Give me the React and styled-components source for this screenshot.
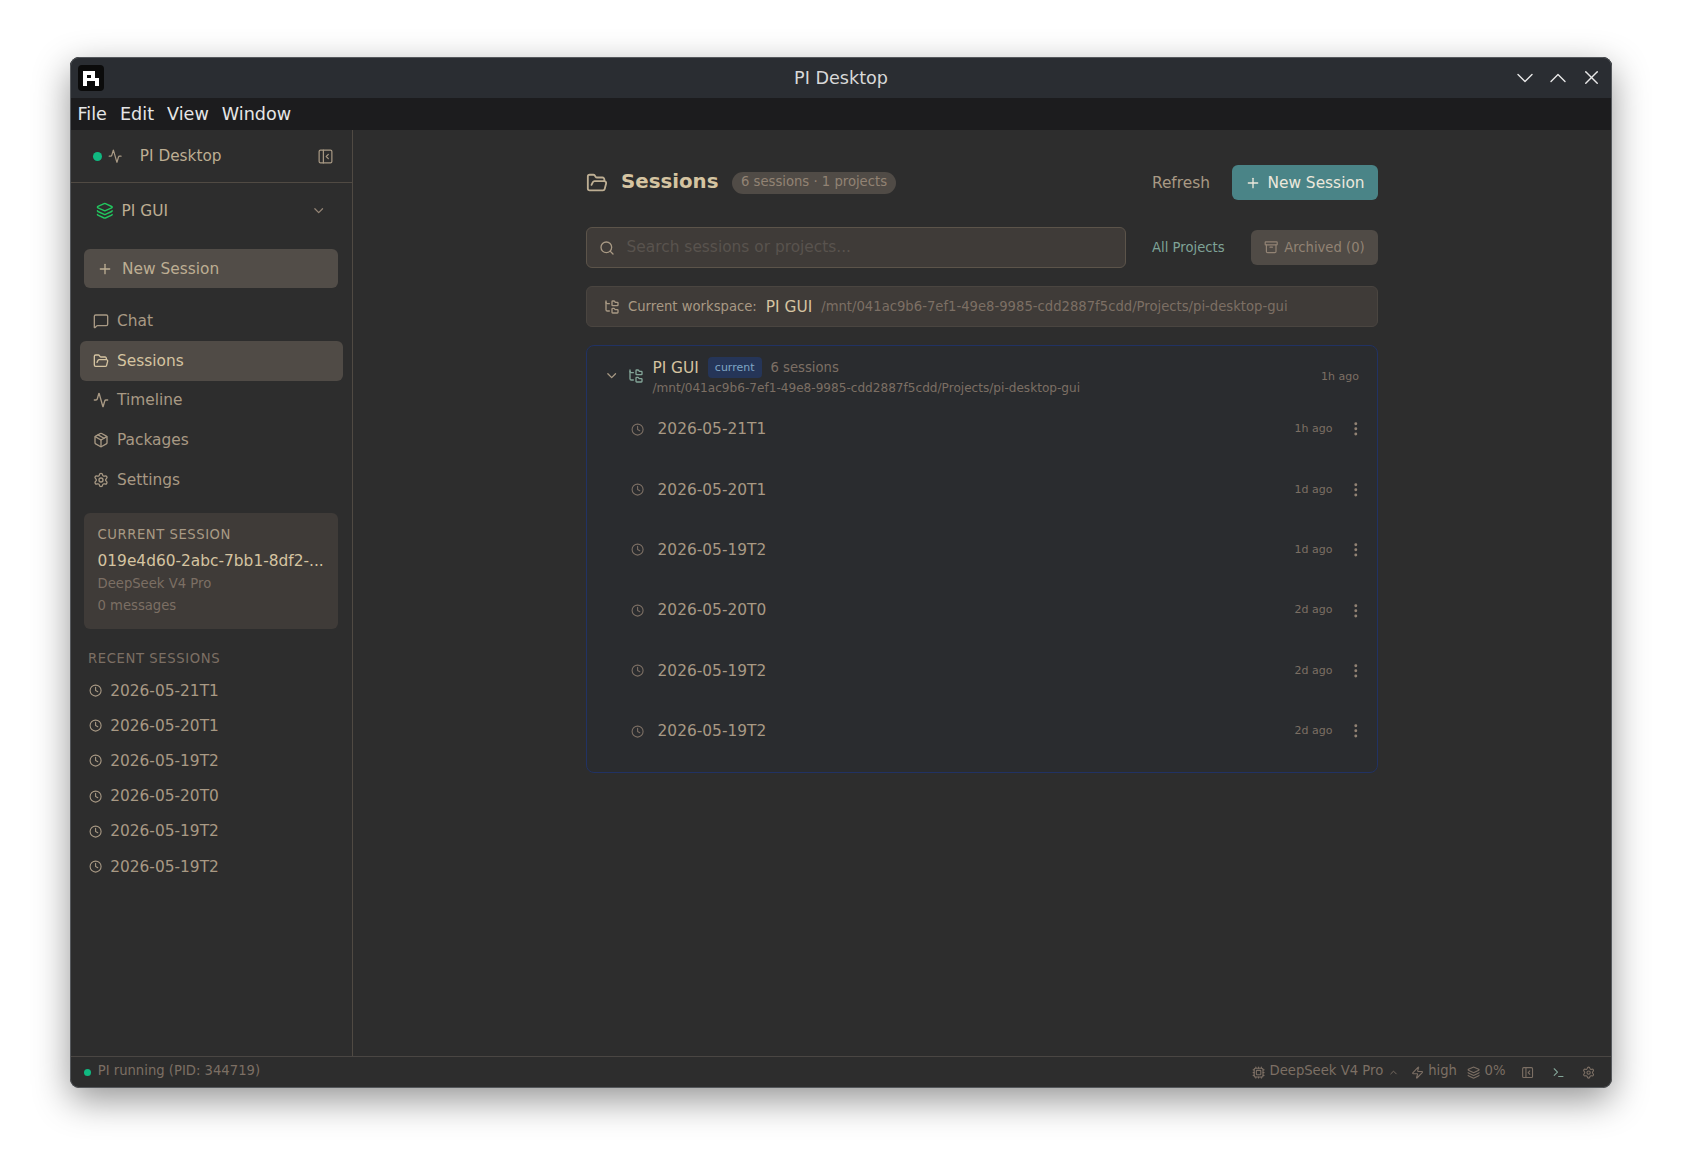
import React from 'react';
import styled, { createGlobalStyle } from 'styled-components';
import {
  Activity,
  Archive,
  ChevronDown,
  ChevronUp,
  Clock,
  Cpu,
  EllipsisVertical,
  FolderOpen,
  FolderTree,
  Layers,
  MessageSquare,
  Package,
  PanelLeftClose,
  Plus,
  Search,
  Settings,
  Terminal,
  X,
  Zap,
} from 'lucide-react';

const sessions = [
  { name: '2026-05-21T1', ago: '1h ago' },
  { name: '2026-05-20T1', ago: '1d ago' },
  { name: '2026-05-19T2', ago: '1d ago' },
  { name: '2026-05-20T0', ago: '2d ago' },
  { name: '2026-05-19T2', ago: '2d ago' },
  { name: '2026-05-19T2', ago: '2d ago' },
];

const navItems = [
  { label: 'Chat', icon: MessageSquare },
  { label: 'Sessions', icon: FolderOpen, active: true },
  { label: 'Timeline', icon: Activity },
  { label: 'Packages', icon: Package },
  { label: 'Settings', icon: Settings },
];

const workspacePath = '/mnt/041ac9b6-7ef1-49e8-9985-cdd2887f5cdd/Projects/pi-desktop-gui';

export default function App() {
  return (
    <Page>
      <GlobalStyle />
      <Window>
        <TitleBar>
          <Logo viewBox="0 0 26 26">
            <rect width="26" height="26" rx="4" fill="#0b0b0b" />
            <path d="M5 6h12v10h-8v5H5z M9 10v3h4v-3z" fill="#fff" fillRule="evenodd" />
            <rect x="17" y="13" width="4" height="8" fill="#fff" />
          </Logo>
          <WindowTitle>PI Desktop</WindowTitle>
          <WindowControls>
            <ChevronDown size={28} strokeWidth={1.2} />
            <ChevronUp size={28} strokeWidth={1.2} />
            <CloseIcon size={23} strokeWidth={1.5} />
          </WindowControls>
        </TitleBar>
        <MenuBar>
          <span>File</span>
          <span>Edit</span>
          <span>View</span>
          <span>Window</span>
        </MenuBar>
        <Body>
          <Sidebar>
            <SidebarHead>
              <StatusDot />
              <Activity size={14.3} color="#a89984" />
              <AppName>PI Desktop</AppName>
              <PanelLeftClose size={17} strokeWidth={1.7} color="#a89984" />
            </SidebarHead>
            <ProjectPicker>
              <Layers size={17.6} color="#22c55e" />
              <ProjectName>PI GUI</ProjectName>
              <ChevronDown size={15.4} color="#928374" />
            </ProjectPicker>
            <SideNewButton>
              <Plus size={16} />
              New Session
            </SideNewButton>
            <Nav>
              {navItems.map(({ label, icon: Icon, active }) => (
                <NavItem key={label} $active={active}>
                  <Icon size={16} />
                  {label}
                </NavItem>
              ))}
            </Nav>
            <CurrentCard>
              <CardLabel>CURRENT SESSION</CardLabel>
              <CardId>019e4d60-2abc-7bb1-8df2-...</CardId>
              <CardMeta>DeepSeek V4 Pro</CardMeta>
              <CardMeta>0 messages</CardMeta>
            </CurrentCard>
            <RecentLabel>RECENT SESSIONS</RecentLabel>
            <RecentList>
              {sessions.map((s, i) => (
                <RecentItem key={i}>
                  <Clock size={13.2} />
                  {s.name}
                </RecentItem>
              ))}
            </RecentList>
          </Sidebar>
          <Main>
            <Content>
              <Header>
                <FolderOpen size={22} color="#bdae93" />
                <Heading>Sessions</Heading>
                <CountPill>6 sessions · 1 projects</CountPill>
                <RefreshLink>Refresh</RefreshLink>
                <PrimaryButton>
                  <Plus size={16} />
                  New Session
                </PrimaryButton>
              </Header>
              <FilterRow>
                <SearchBox>
                  <Search size={16} color="#a89984" />
                  <SearchInput placeholder="Search sessions or projects..." readOnly />
                </SearchBox>
                <AllProjects>All Projects</AllProjects>
                <ArchivedButton>
                  <Archive size={14.4} />
                  Archived (0)
                </ArchivedButton>
              </FilterRow>
              <WorkspaceBar>
                <FolderTree size={16} color="#a89984" />
                <WorkspaceLabel>Current workspace:</WorkspaceLabel>
                <WorkspaceName>PI GUI</WorkspaceName>
                <WorkspacePath>{workspacePath}</WorkspacePath>
              </WorkspaceBar>
              <ProjectCard>
                <ProjectHead>
                  <ChevronDown size={15.4} color="#a89984" />
                  <FolderTree size={16} color="#83a598" />
                  <ProjectInfo>
                    <ProjectTitleRow>
                      <ProjectTitle>PI GUI</ProjectTitle>
                      <CurrentBadge>current</CurrentBadge>
                      <SessionCount>6 sessions</SessionCount>
                    </ProjectTitleRow>
                    <ProjectPath>{workspacePath}</ProjectPath>
                  </ProjectInfo>
                  <AgoText>1h ago</AgoText>
                </ProjectHead>
                <SessionList>
                  {sessions.map((s, i) => (
                    <SessionRow key={i}>
                      <Clock size={13.2} color="#7c6f64" />
                      <SessionName>{s.name}</SessionName>
                      <RowAgo>{s.ago}</RowAgo>
                      <EllipsisVertical size={17.6} color="#928374" />
                    </SessionRow>
                  ))}
                </SessionList>
              </ProjectCard>
            </Content>
          </Main>
        </Body>
        <StatusBar>
          <StatusLeft>
            <SmallDot />
            PI running (PID: 344719)
          </StatusLeft>
          <StatusRight>
            <StatusItem>
              <Cpu size={13.2} />
              DeepSeek V4 Pro
              <ChevronUp size={11} />
            </StatusItem>
            <EffortItem>
              <Zap size={13.2} />
              high
            </EffortItem>
            <StatusItem>
              <Layers size={13.2} />
              0%
            </StatusItem>
            <StatusIcons>
              <PanelLeftClose size={13.2} />
              <Terminal size={13.2} color="#83a598" />
              <Settings size={13.2} />
            </StatusIcons>
          </StatusRight>
        </StatusBar>
      </Window>
    </Page>
  );
}

const GlobalStyle = createGlobalStyle`
  html, body {
    margin: 0;
    padding: 0;
    background: #fff;
  }
  * {
    box-sizing: border-box;
  }
`;

const Page = styled.div`
  width: 1683px;
  height: 1172px;
  padding: 57px 71px 84px 70px;
  font-family: 'DejaVu Sans', sans-serif;
  overflow: hidden;
`;

const Window = styled.div`
  position: relative;
  height: 1031px;
  display: flex;
  flex-direction: column;
  background: #2d2d2d;
  border-radius: 9px;
  overflow: hidden;
  box-shadow: 0 12px 36px rgba(0, 0, 0, 0.42);
  &::after {
    content: '';
    position: absolute;
    inset: 0;
    border: 1px solid #55585c;
    border-radius: 9px;
    pointer-events: none;
  }
`;

const TitleBar = styled.div`
  height: 41px;
  flex: none;
  display: flex;
  align-items: center;
  padding: 0 9.5px 0 8px;
  background: #2a2d32;
  position: relative;
`;

const Logo = styled.svg`
  width: 26px;
  height: 26px;
`;

const WindowTitle = styled.div`
  position: absolute;
  left: 0;
  right: 0;
  text-align: center;
  font-size: 17.6px;
  color: #d8d8d8;
`;

const WindowControls = styled.div`
  margin-left: auto;
  display: flex;
  align-items: center;
  gap: 5px;
  color: #e8e8e8;
`;

const CloseIcon = styled(X)`
  margin-left: 3px;
`;

const MenuBar = styled.div`
  height: 32px;
  flex: none;
  display: flex;
  align-items: center;
  gap: 13px;
  padding: 0 7.5px;
  background: #1c1c1e;
  color: #e6e6e6;
  font-size: 17.6px;
`;

const Body = styled.div`
  flex: 1;
  min-height: 0;
  display: flex;
`;

const Sidebar = styled.aside`
  width: 283px;
  flex: none;
  display: flex;
  flex-direction: column;
  border-right: 1px solid #504a43;
`;

const SidebarHead = styled.div`
  height: 53px;
  flex: none;
  display: flex;
  align-items: center;
  gap: 5.5px;
  padding: 0 18px 0 23px;
  border-bottom: 1px solid #504a43;
`;

const StatusDot = styled.span`
  width: 9px;
  height: 9px;
  border-radius: 50%;
  background: #10b981;
`;

const AppName = styled.span`
  flex: 1;
  margin-left: 12.5px;
  font-size: 15.3px;
  color: #bdae93;
`;

const ProjectPicker = styled.div`
  display: flex;
  align-items: center;
  gap: 8px;
  height: 56px;
  padding: 0 26px;
`;

const ProjectName = styled.span`
  flex: 1;
  font-size: 15.4px;
  color: #bdae93;
`;

const SideNewButton = styled.div`
  height: 39px;
  margin: 10px 14px 0;
  padding: 0 12px 0 13px;
  display: flex;
  align-items: center;
  gap: 9px;
  border-radius: 6px;
  background: #524d48;
  color: #bdae93;
  font-size: 15.4px;
`;

const Nav = styled.nav`
  display: flex;
  flex-direction: column;
  margin: 13px 9px 0 10px;
`;

const NavItem = styled.div`
  height: 39.8px;
  display: flex;
  align-items: center;
  gap: 8px;
  padding: 0 13px;
  border-radius: 6px;
  font-size: 15.4px;
  color: ${(p) => (p.$active ? '#d5c4a1' : '#a89984')};
  background: ${(p) => (p.$active ? '#504b46' : 'transparent')};
`;

const CurrentCard = styled.div`
  margin: 13px 14px 0;
  height: 116px;
  padding: 14px 13.5px;
  border-radius: 6px;
  background: #3f3b38;
`;

const CardLabel = styled.div`
  font-size: 13.2px;
  letter-spacing: 0.55px;
  color: #a89984;
`;

const CardId = styled.div`
  margin-top: 10px;
  font-size: 15.4px;
  color: #d5c4a1;
  white-space: nowrap;
`;

const CardMeta = styled.div`
  margin-top: 6.5px;
  font-size: 13.2px;
  color: #7c6f64;
`;

const RecentLabel = styled.div`
  margin: 22px 18px 0;
  font-size: 13.2px;
  letter-spacing: 0.6px;
  color: #7c6f64;
`;

const RecentList = styled.div`
  margin: 7px 19px 0;
  display: flex;
  flex-direction: column;
`;

const RecentItem = styled.div`
  height: 35.2px;
  display: flex;
  align-items: center;
  gap: 8px;
  font-size: 15.4px;
  color: #a89984;
`;

const Main = styled.main`
  flex: 1;
  min-width: 0;
  display: flex;
  justify-content: center;
  padding-right: 1px;
`;

const Content = styled.div`
  width: 792px;
  padding-top: 35px;
  display: flex;
  flex-direction: column;
`;

const Header = styled.div`
  display: flex;
  align-items: center;
  height: 35px;
`;

const Heading = styled.h1`
  margin: -2px 14px 0 13px;
  font-size: 19.8px;
  font-weight: 700;
  color: #d5c4a1;
`;

const CountPill = styled.span`
  height: 22px;
  padding: 0 8.5px 2px;
  display: flex;
  align-items: center;
  border-radius: 11px;
  background: #504b46;
  font-size: 13.2px;
  color: #928374;
`;

const RefreshLink = styled.span`
  margin-left: auto;
  font-size: 15.4px;
  color: #a89984;
`;

const PrimaryButton = styled.div`
  margin-left: 22px;
  width: 146px;
  height: 35px;
  display: flex;
  align-items: center;
  justify-content: center;
  gap: 6px;
  border-radius: 6px;
  background: #4a8487;
  color: #ece8dc;
  font-size: 15.4px;
`;

const FilterRow = styled.div`
  margin-top: 27px;
  display: flex;
  align-items: center;
`;

const SearchBox = styled.div`
  width: 540px;
  height: 41px;
  display: flex;
  align-items: center;
  gap: 11.6px;
  padding: 0 12px;
  border: 1px solid #5c544a;
  border-radius: 6px;
  background: #3f3b38;
`;

const SearchInput = styled.input`
  flex: 1;
  margin-top: -2px;
  border: 0;
  outline: 0;
  padding: 0;
  background: transparent;
  font: inherit;
  font-size: 15.4px;
  color: #d5c4a1;
  &::placeholder {
    color: #59534e;
    opacity: 1;
  }
`;

const AllProjects = styled.span`
  margin-left: 26px;
  font-size: 13.2px;
  color: #7fa397;
`;

const ArchivedButton = styled.div`
  margin-left: auto;
  width: 127px;
  height: 35px;
  display: flex;
  align-items: center;
  justify-content: center;
  gap: 5.5px;
  border-radius: 6px;
  background: #504b46;
  color: #928374;
  font-size: 13.2px;
`;

const WorkspaceBar = styled.div`
  margin-top: 18px;
  height: 41px;
  display: flex;
  align-items: center;
  padding: 0 17px;
  border: 1px solid #4a4540;
  border-radius: 6px;
  background: #3f3b38;
`;

const WorkspaceLabel = styled.span`
  margin-left: 8px;
  font-size: 13.2px;
  color: #a89984;
`;

const WorkspaceName = styled.span`
  margin-left: 9px;
  font-size: 15.4px;
  color: #d5c4a1;
`;

const WorkspacePath = styled.span`
  margin-left: 9px;
  font-size: 13.2px;
  color: #7c6f64;
`;

const ProjectCard = styled.section`
  margin-top: 18px;
  height: 428px;
  border: 1px solid #213263;
  border-radius: 8px;
  background: #2a2c2f;
`;

const ProjectHead = styled.div`
  height: 60px;
  display: flex;
  align-items: center;
  gap: 8.5px;
  padding: 0 18px 0 17px;
`;

const ProjectInfo = styled.div`
  flex: 1;
`;

const ProjectTitleRow = styled.div`
  display: flex;
  align-items: center;
  gap: 9px;
`;

const ProjectTitle = styled.span`
  font-size: 15.4px;
  color: #d5c4a1;
`;

const CurrentBadge = styled.span`
  height: 21px;
  padding: 0 7px;
  display: flex;
  align-items: center;
  border-radius: 4px;
  background: #253558;
  font-size: 11px;
  color: #7fa5c5;
`;

const SessionCount = styled.span`
  font-size: 13.2px;
  color: #7c6f64;
`;

const ProjectPath = styled.div`
  margin-top: 3px;
  font-size: 12.1px;
  color: #7c6f64;
`;

const AgoText = styled.span`
  font-size: 11px;
  color: #7c6f64;
`;

const RowAgo = styled(AgoText)`
  margin: -1px 1px 0 0;
`;

const SessionList = styled.div`
  display: flex;
  flex-direction: column;
  margin-top: -7px;
`;

const SessionRow = styled.div`
  height: 60.4px;
  display: flex;
  align-items: center;
  gap: 13.4px;
  padding: 0 12.5px 0 44px;
`;

const SessionName = styled.span`
  flex: 1;
  font-size: 15.4px;
  color: #a89984;
`;

const StatusBar = styled.footer`
  height: 32px;
  flex: none;
  display: flex;
  align-items: center;
  justify-content: space-between;
  padding: 0 17px 5px 14px;
  border-top: 1px solid #4a4643;
  font-size: 13.2px;
  color: #7c6f64;
  svg {
    margin-top: 5px;
  }
`;

const StatusLeft = styled.div`
  display: flex;
  align-items: center;
  gap: 6.7px;
`;

const SmallDot = styled.span`
  width: 7px;
  height: 7px;
  margin-top: 4px;
  border-radius: 50%;
  background: #10b981;
`;

const StatusRight = styled.div`
  display: flex;
  align-items: center;
  gap: 12px;
`;

const StatusItem = styled.div`
  display: flex;
  align-items: center;
  gap: 4.4px;
`;

const EffortItem = styled(StatusItem)`
  margin-right: -2px;
`;

const StatusIcons = styled.div`
  display: flex;
  align-items: center;
  gap: 17px;
  margin-left: 4px;
`;
